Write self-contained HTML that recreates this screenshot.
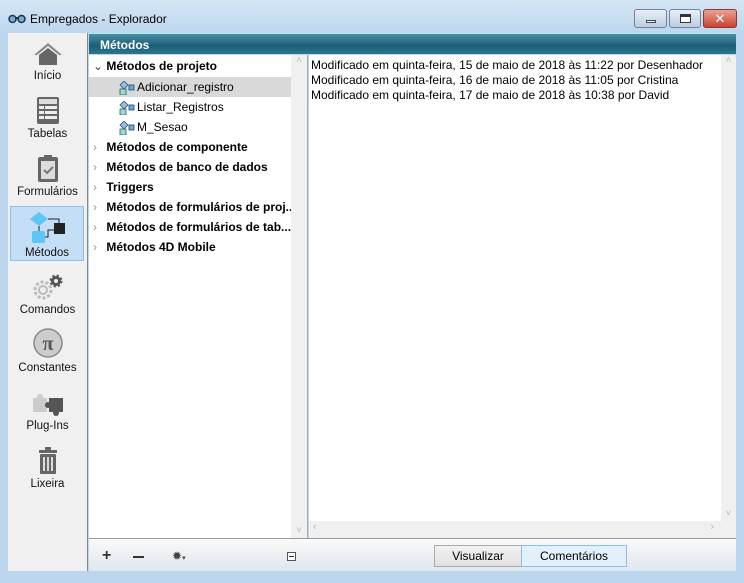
<!DOCTYPE html><html><head><style>
*{margin:0;padding:0;box-sizing:border-box}
body{width:744px;height:583px;background:#bcd6ee;font-family:"Liberation Sans","DejaVu Sans",sans-serif;font-size:12px;position:relative;overflow:hidden}
.abs{position:absolute}
.tb{left:0;top:0;width:744px;height:34px;background:linear-gradient(#d5e6f5,#bcd6ee)}
.side{left:8px;top:33px;width:80px;height:538px;background:#f0f0f0;border-right:1px solid #888}
.si{position:absolute;left:0;width:79px;text-align:center;font-size:11.5px;color:#111}
.hdr{left:89px;top:33px;width:647px;height:21px;background:linear-gradient(#4a8ea4,#1a5f78 60%,#2c7890);color:#fff;font-weight:bold;font-size:12px;padding:4px 0 0 11px;border-top:1px solid #aee}
.tree{left:89px;top:55px;width:219px;height:483px;background:#fff;border-right:1px solid #aaa}
.row{position:absolute;left:0;height:20px;line-height:20px;font-size:12px;white-space:nowrap}
.b{font-weight:bold}
.right{left:309px;top:55px;width:427px;height:483px;background:#fff}
.bot{left:89px;top:538px;width:647px;height:33px;background:linear-gradient(#fafafa,#dfe6ee);border-top:1px solid #999}
.btn{border:1px solid #aaa;height:22px;top:545px;line-height:20px;text-align:center;font-size:12px}
.mi{position:absolute;top:4px;left:-18px}
.ch{color:#999;font-weight:normal;display:inline-block;width:10px}
</style></head><body>
<div class="abs tb"></div>
<svg class="abs" style="left:8px;top:14px" width="18" height="10"><circle cx="4.5" cy="5" r="3.5" fill="#7ad" stroke="#234" stroke-width="1.5"/><circle cx="13.5" cy="5" r="3.5" fill="#7ad" stroke="#234" stroke-width="1.5"/><rect x="7" y="3" width="4" height="2" fill="#234"/></svg>
<div class="abs" style="left:30px;top:12px;font-size:12px;color:#000">Empregados - Explorador</div>
<div class="abs" style="left:634px;top:9px;width:33px;height:19px;border:1px solid #6d83a0;border-radius:3px;background:linear-gradient(#e8f0f8,#bccde0)"><div style="position:absolute;left:11px;top:10px;width:10px;height:3px;background:#fff;border:1px solid #445"></div></div>
<div class="abs" style="left:669px;top:9px;width:32px;height:19px;border:1px solid #6d83a0;border-radius:3px;background:linear-gradient(#e8f0f8,#bccde0)"><div style="position:absolute;left:10px;top:4px;width:11px;height:9px;border:1px solid #334;border-top-width:3px;background:#fff"></div></div>
<div class="abs" style="left:703px;top:9px;width:34px;height:19px;border:1px solid #8a3a30;border-radius:3px;background:linear-gradient(#e9a396,#c8432f);color:#fff;font-weight:bold;text-align:center;line-height:17px;font-size:13px">✕</div>
<div class="abs side">
<div class="si" style="top:8px"><svg width="30" height="26"><path d="M15 2 L1 14 L4 14 L15 5 L26 14 L29 14Z" fill="#888"/><path d="M6 14 L15 7 L24 14 V24 H6Z" fill="#666"/></svg><br>Início</div>
<div class="si" style="top:62px"><svg width="26" height="30"><rect x="2" y="2" width="22" height="27" rx="2" fill="#666"/><rect x="4" y="4" width="18" height="5" fill="#ddd"/><g fill="#eee"><rect x="4" y="11" width="5" height="3"/><rect x="10" y="11" width="12" height="3"/><rect x="4" y="16" width="5" height="3"/><rect x="10" y="16" width="12" height="3"/><rect x="4" y="21" width="5" height="3"/><rect x="10" y="21" width="12" height="3"/></g></svg><br>Tabelas</div>
<div class="si" style="top:120px"><svg width="24" height="30"><rect x="2" y="4" width="20" height="25" rx="2" fill="#666"/><rect x="5" y="8" width="14" height="18" fill="#ddd"/><rect x="8" y="2" width="8" height="5" fill="#666"/><path d="M8 17 l3 3 l6-6" stroke="#777" stroke-width="2" fill="none"/></svg><br>Formulários</div>
<div class="si" style="top:173px;left:2px;width:74px;height:55px;background:#c4def5;border:1px solid #8cc0ea;padding-top:3px"><svg width="40" height="34"><path d="M12 2 L21 9 L12 16 L3 9Z" fill="#5ec6f5"/><rect x="5" y="21" width="13" height="12" rx="2" fill="#5ec6f5"/><rect x="27" y="13" width="11" height="11" fill="#222"/><path d="M21 9 H32 V13 M27 20 H21 V27 H18 M12 16 V21" stroke="#222" fill="none"/></svg><br>Métodos</div>
<div class="si" style="top:240px"><svg width="34" height="28"><circle cx="12" cy="17" r="8" fill="none" stroke="#bbb" stroke-width="3" stroke-dasharray="3 2"/><circle cx="12" cy="17" r="4" fill="none" stroke="#bbb" stroke-width="2"/><circle cx="25" cy="8" r="5" fill="#555" stroke="#555" stroke-width="3" stroke-dasharray="2 2"/><circle cx="25" cy="8" r="2" fill="#f0f0f0"/></svg><br>Comandos</div>
<div class="si" style="top:294px"><svg width="32" height="32"><circle cx="16" cy="16" r="14" fill="#ccc" stroke="#888" stroke-width="1.5"/><text x="16" y="23" text-anchor="middle" font-size="20" font-weight="bold" fill="#555" font-family="Liberation Serif">π</text></svg><br>Constantes</div>
<div class="si" style="top:358px"><svg width="36" height="26"><rect x="3" y="7" width="14" height="14" fill="#ccc"/><circle cx="10" cy="6" r="3" fill="#ccc"/><rect x="19" y="7" width="14" height="14" fill="#555"/><circle cx="26" cy="22" r="3" fill="#555"/><circle cx="18" cy="14" r="3" fill="#555"/></svg><br>Plug-Ins</div>
<div class="si" style="top:412px"><svg width="24" height="30"><rect x="3" y="5" width="18" height="3" fill="#666"/><rect x="9" y="2" width="6" height="3" fill="#666"/><rect x="4" y="9" width="16" height="20" rx="1" fill="#666"/><g fill="#ddd"><rect x="7" y="12" width="2" height="14"/><rect x="11" y="12" width="2" height="14"/><rect x="15" y="12" width="2" height="14"/></g></svg><br>Lixeira</div>
</div>
<div class="abs hdr">Métodos</div>
<div class="abs tree">
<div class="row b" style="top:1px;left:4px"><span class="ch" style="color:#444">⌄</span> Métodos de projeto</div>
<div style="position:absolute;left:0;top:22px;width:202px;height:20px;background:#d9d9d9"></div>
<div class="row" style="top:22px;left:48px"><svg class="mi" width="16" height="14"><path d="M5 0 L9 4 L5 8 L1 4Z" fill="#9bd" stroke="#357" stroke-width=".8"/><rect x="1" y="8" width="6" height="6" fill="#9dc" stroke="#357" stroke-width=".8"/><rect x="10" y="4" width="5" height="5" fill="#6ad" stroke="#246" stroke-width=".8"/></svg>Adicionar_registro</div>
<div class="row" style="top:42px;left:48px"><svg class="mi" width="16" height="14"><path d="M5 0 L9 4 L5 8 L1 4Z" fill="#9bd" stroke="#357" stroke-width=".8"/><rect x="1" y="8" width="6" height="6" fill="#9dc" stroke="#357" stroke-width=".8"/><rect x="10" y="4" width="5" height="5" fill="#6ad" stroke="#246" stroke-width=".8"/></svg>Listar_Registros</div>
<div class="row" style="top:62px;left:48px"><svg class="mi" width="16" height="14"><path d="M5 0 L9 4 L5 8 L1 4Z" fill="#9bd" stroke="#357" stroke-width=".8"/><rect x="1" y="8" width="6" height="6" fill="#9dc" stroke="#357" stroke-width=".8"/><rect x="10" y="4" width="5" height="5" fill="#6ad" stroke="#246" stroke-width=".8"/></svg>M_Sesao</div>
<div class="row b" style="top:82px;left:4px"><span class="ch">›</span> Métodos de componente</div>
<div class="row b" style="top:102px;left:4px"><span class="ch">›</span> Métodos de banco de dados</div>
<div class="row b" style="top:122px;left:4px"><span class="ch">›</span> Triggers</div>
<div class="row b" style="top:142px;left:4px"><span class="ch">›</span> Métodos de formulários de proj...</div>
<div class="row b" style="top:162px;left:4px"><span class="ch">›</span> Métodos de formulários de tab...</div>
<div class="row b" style="top:182px;left:4px"><span class="ch">›</span> Métodos 4D Mobile</div>
<div style="position:absolute;left:202px;top:0;width:16px;height:483px;background:#f0f0f0;color:#bbb;font-size:10px;text-align:center">˄<div style="position:absolute;bottom:2px;width:16px">˅</div></div>
</div>
<div class="abs right">
<div style="padding:3px 0 0 2px;line-height:15px;font-size:12px">Modificado em quinta-feira, 15 de maio de 2018 às 11:22 por Desenhador<br>Modificado em quinta-feira, 16 de maio de 2018 às 11:05 por Cristina<br>Modificado em quinta-feira, 17 de maio de 2018 às 10:38 por David</div>
<div style="position:absolute;left:412px;top:0;width:15px;height:466px;background:#f0f0f0;color:#bbb;font-size:10px;text-align:center">˄<div style="position:absolute;bottom:2px;width:15px">˅</div></div>
<div style="position:absolute;left:0;top:466px;width:427px;height:17px;background:#f0f0f0;color:#bbb;font-size:11px;padding-left:4px">‹<span style="position:absolute;right:22px">›</span></div>
</div>
<div class="abs bot"></div>
<div class="abs" style="left:102px;top:547px;font-size:16px;font-weight:bold;color:#333">+</div>
<div class="abs" style="left:133px;top:556px;width:11px;height:2px;background:#333"></div>
<div class="abs" style="left:172px;top:549px;font-size:12px;color:#444">✹<span style="font-size:7px">▾</span></div>
<div class="abs" style="left:287px;top:552px;width:9px;height:9px;border:1px solid #555;background:#fff"><div style="margin:3px 1px;height:1px;background:#333"></div></div>
<div class="abs btn" style="left:434px;width:88px;background:linear-gradient(#f2f2f2,#e0e0e0)">Visualizar</div>
<div class="abs btn" style="left:521px;width:106px;background:#e2f0fb;border-color:#8cc0ea">Comentários</div>
</body></html>
